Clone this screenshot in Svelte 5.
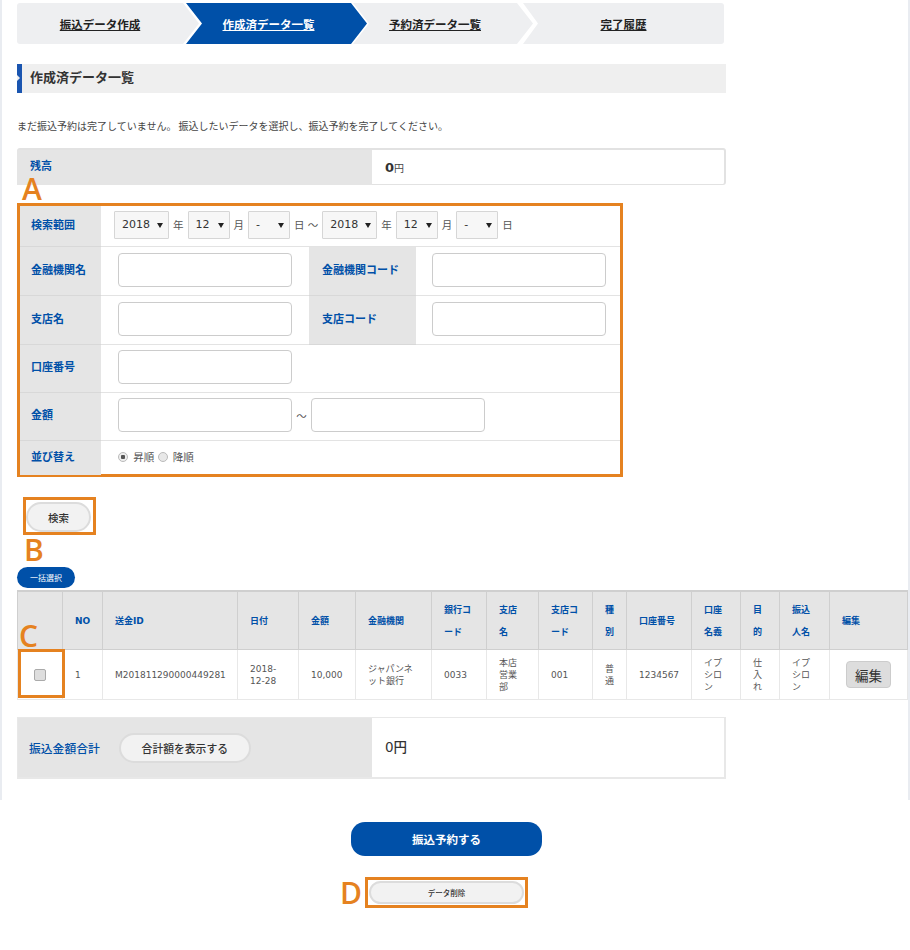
<script>
	const steps = [
		{ label: '振込データ作成', cls: 'first' },
		{ label: '作成済データ一覧', cls: 'mid active' },
		{ label: '予約済データ一覧', cls: 'mid' },
		{ label: '完了履歴', cls: 'last' }
	];

	const columns = [
		{ label: '', width: 45 },
		{ label: 'NO', width: 40 },
		{ label: '送金ID', width: 135 },
		{ label: '日付', width: 61 },
		{ label: '金額', width: 57 },
		{ label: '金融機関', width: 76 },
		{ label: '銀行コード', width: 55 },
		{ label: '支店名', width: 52 },
		{ label: '支店コード', width: 54 },
		{ label: '種別', width: 34 },
		{ label: '口座番号', width: 65 },
		{ label: '口座名義', width: 49 },
		{ label: '目的', width: 39 },
		{ label: '振込人名', width: 50 },
		{ label: '編集', width: 78 }
	];

	const row = [
		'1',
		'M201811290000449281',
		'2018-12-28',
		'10,000',
		'ジャパンネット銀行',
		'0033',
		'本店営業部',
		'001',
		'普通',
		'1234567',
		'イプシロン',
		'仕入れ',
		'イプシロン'
	];
</script>

{#snippet dropdown(value, cls)}
	<span class="select {cls}">
		<select>
			<option>{value}</option>
		</select>
	</span>
{/snippet}

<div class="page">
	<div class="frame">
		<nav class="steps">
			{#each steps as step}
				<a class="step {step.cls}" href="#top">{step.label}</a>
			{/each}
		</nav>

		<h1 class="heading">作成済データ一覧</h1>

		<p class="message">まだ振込予約は完了していません。 振込したいデータを選択し、振込予約を完了してください。</p>

		<div class="balance">
			<div class="balance-label">残高</div>
			<div class="balance-value"><strong>0</strong>円</div>
		</div>

		<div class="search">
			<span class="letter letter-a">A</span>
			<table class="search-table">
				<colgroup>
					<col class="c-label" />
					<col class="c-field" />
					<col class="c-label2" />
					<col />
				</colgroup>
				<tbody>
					<tr class="r-range">
						<th>検索範囲</th>
						<td colspan="3" class="range">
							<div class="range-row">
								{@render dropdown('2018', 'year')}
								<span class="unit">年</span>
								{@render dropdown('12', 'short')}
								<span class="unit">月</span>
								{@render dropdown('-', 'short')}
								<span class="unit">日 ～</span>
								{@render dropdown('2018', 'year')}
								<span class="unit">年</span>
								{@render dropdown('12', 'short')}
								<span class="unit">月</span>
								{@render dropdown('-', 'short')}
								<span class="unit">日</span>
							</div>
						</td>
					</tr>
					<tr class="r-tall">
						<th>金融機関名</th>
						<td><input type="text" /></td>
						<th>金融機関コード</th>
						<td class="second"><input type="text" /></td>
					</tr>
					<tr class="r-tall">
						<th>支店名</th>
						<td><input type="text" /></td>
						<th>支店コード</th>
						<td class="second"><input type="text" /></td>
					</tr>
					<tr class="r-mid">
						<th>口座番号</th>
						<td colspan="3"><input type="text" /></td>
					</tr>
					<tr class="r-mid">
						<th>金額</th>
						<td colspan="3" class="amount">
							<input type="text" />
							<span class="tilde">～</span>
							<input type="text" />
						</td>
					</tr>
					<tr class="r-sort">
						<th>並び替え</th>
						<td colspan="3" class="sort">
							<label><input type="radio" name="sort" checked /> 昇順</label>
							<label><input type="radio" name="sort" /> 降順</label>
						</td>
					</tr>
				</tbody>
			</table>
		</div>

		<div class="search-action">
			<button class="pill search-btn" type="button">検索</button>
			<span class="letter letter-b">B</span>
		</div>

		<button class="select-all" type="button">一括選択</button>

		<table class="list">
			<colgroup>
				{#each columns as col}
					<col style="width: {col.width}px" />
				{/each}
			</colgroup>
			<thead>
				<tr>
					{#each columns as col}
						<th>{col.label}</th>
					{/each}
				</tr>
			</thead>
			<tbody>
				<tr>
					<td class="check">
						<span class="letter letter-c">C</span>
						<span class="check-mark"></span>
						<input type="checkbox" />
					</td>
					{#each row as cell}
						<td>{cell}</td>
					{/each}
					<td class="edit"><button type="button">編集</button></td>
				</tr>
			</tbody>
		</table>

		<div class="total">
			<div class="total-label">
				<span>振込金額合計</span>
				<button class="pill total-btn" type="button">合計額を表示する</button>
			</div>
			<div class="total-value">0円</div>
		</div>
	</div>

	<div class="actions">
		<button class="reserve" type="button">振込予約する</button>
		<div class="delete-box">
			<span class="letter letter-d">D</span>
			<button class="pill delete-btn" type="button">データ削除</button>
		</div>
	</div>
</div>

<style>
	:global(body) {
		background: #fff;
	}

	.page {
		width: 910px;
		height: 950px;
		overflow: hidden;
		font-family: 'DejaVu Sans', 'Noto Sans CJK JP', sans-serif;
		font-size: 10px;
		color: #444;
	}

	.frame {
		box-sizing: border-box;
		height: 800px;
		padding: 3px 0 0 15px;
		border-left: 2px solid #e9ecf1;
		border-right: 2px solid #e9ecf1;
	}

	.steps {
		display: flex;
		height: 41px;
		width: 707px;
	}

	.step {
		display: flex;
		align-items: center;
		justify-content: center;
		box-sizing: border-box;
		height: 41px;
		background: #eeeff1;
		color: #222;
		font-size: 11.5px;
		font-weight: 700;
		text-decoration: underline;
	}

	.step.first {
		width: 182px;
		padding-right: 16px;
		border-radius: 3px 0 0 3px;
		clip-path: polygon(0 0, calc(100% - 16px) 0, 100% 50%, calc(100% - 16px) 100%, 0 100%);
	}

	.step.mid {
		width: 181px;
		margin-left: -13px;
		padding-right: 16px;
		clip-path: polygon(0 0, calc(100% - 16px) 0, 100% 50%, calc(100% - 16px) 100%, 0 100%, 16px 50%);
	}

	.step.mid + .step.mid {
		margin-left: -14px;
		width: 180px;
	}

	.step.last {
		width: 201px;
		margin-left: -10px;
		border-radius: 0 3px 3px 0;
		clip-path: polygon(0 0, 100% 0, 100% 100%, 0 100%, 15px 50%);
	}

	.step.active {
		background: #0050a8;
		color: #fff;
	}

	.heading {
		position: relative;
		box-sizing: border-box;
		width: 709px;
		height: 29px;
		margin: 20px 0 0;
		padding-left: 8px;
		border-left: 5px solid #1a55b0;
		background: #efefef;
		color: #333;
		font-size: 13px;
		font-weight: 700;
		line-height: 28px;
	}

	.heading::before {
		content: '';
		position: absolute;
		left: -5px;
		top: 11px;
		border: 3px solid transparent;
		border-left-color: #efefef;
	}

	.message {
		margin: 27px 0 0;
		font-size: 10px;
		line-height: 14px;
		word-spacing: -1px;
		color: #444;
	}

	.balance {
		display: flex;
		box-sizing: border-box;
		width: 709px;
		height: 37px;
		margin-top: 14px;
		border: 1px solid #e2e2e2;
		border-top-width: 2px;
		border-right-width: 2px;
		border-radius: 3px;
	}

	.balance-label {
		box-sizing: border-box;
		flex: none;
		width: 355px;
		padding-left: 13px;
		background: #e5e5e5;
		color: #0050a8;
		font-size: 11px;
		font-weight: 700;
		line-height: 34px;
		margin: 0 0 -1px -1px;
	}

	.balance-value {
		padding-left: 13px;
		font-size: 10px;
		line-height: 35px;
	}

	.balance-value strong {
		font-size: 13px;
		color: #333;
	}

	.search {
		position: relative;
		box-sizing: border-box;
		width: 606px;
		height: 274px;
		margin-top: 18px;
		border: 3px solid #e58220;
	}

	.letter {
		position: absolute;
		color: #e58220;
		font-family: 'Open Sans', sans-serif;
		font-size: 30px;
		font-weight: 600;
		line-height: 30px;
	}

	.letter-a {
		left: 2px;
		top: -32px;
	}

	.search-table {
		width: 100%;
		border-collapse: collapse;
		table-layout: fixed;
	}

	.c-label {
		width: 81px;
	}

	.c-field {
		width: 208px;
	}

	.c-label2 {
		width: 107px;
	}

	.search-table th {
		padding: 0 0 4px 11px;
		background: #e5e5e5;
		color: #0050a8;
		font-size: 11px;
		font-weight: 700;
		text-align: left;
		border-bottom: 1px solid #d8d8d8;
	}

	.search-table td {
		padding: 0 0 2px 17px;
		border-bottom: 1px solid #e3e3e3;
		white-space: nowrap;
	}

	.search-table td.second {
		padding-left: 16px;
	}

	.search-table tr:last-child th,
	.search-table tr:last-child td {
		border-bottom: 0;
	}

	.search-table th + td + th {
		padding-left: 13px;
	}

	.r-range {
		height: 40px;
	}

	.r-tall {
		height: 49px;
	}

	.r-mid {
		height: 48px;
	}

	.r-sort {
		height: 35px;
	}

	.search-table td.range {
		padding-left: 13px;
	}

	.range-row {
		display: flex;
		align-items: center;
	}

	.select {
		position: relative;
		display: block;
		flex: none;
	}

	.select::after {
		content: '';
		position: absolute;
		right: 6px;
		top: 12px;
		border: 3.5px solid transparent;
		border-top: 5px solid #222;
		border-bottom: 0;
		pointer-events: none;
	}

	.select select {
		display: block;
		box-sizing: border-box;
		height: 28px;
		padding: 0 0 0 7px;
		appearance: none;
		border: 1px solid #d6d6d6;
		border-radius: 1px;
		background: #f7f7f7;
		color: #333;
		font: inherit;
		font-size: 11px;
	}

	.select.year select {
		width: 55px;
	}

	.select.short select {
		width: 42px;
	}

	.unit {
		margin: 0 4px;
		color: #555;
		font-size: 10.5px;
	}

	.tilde {
		margin: 0 1px;
		color: #555;
		font-size: 10.5px;
		vertical-align: middle;
	}

	input[type='text'] {
		box-sizing: border-box;
		width: 174px;
		height: 34px;
		padding: 0 8px;
		border: 1px solid #ccc;
		border-radius: 4px;
		background: #fff;
		vertical-align: middle;
	}

	.sort label {
		color: #555;
		font-size: 10.5px;
	}

	input[type='radio'] {
		box-sizing: border-box;
		width: 10px;
		height: 10px;
		margin: 0 2px 2px 0;
		vertical-align: middle;
		appearance: none;
		border: 1px solid #bbb;
		border-radius: 50%;
		background: #e8e8e8;
	}

	input[type='radio']:checked {
		background: radial-gradient(circle, #555 0 2px, #eee 2.5px);
	}

	.search-action {
		position: relative;
		box-sizing: border-box;
		width: 73px;
		height: 38px;
		margin: 20px 0 0 6px;
		padding: 2px 0 0 0;
		border: 3px solid #e58220;
	}

	.letter-b {
		left: -2px;
		top: 35px;
	}

	.pill {
		box-sizing: border-box;
		border: 2px solid #dcdcdc;
		background: #f2f2f2;
		color: #333;
		font-family: inherit;
		font-weight: 700;
		padding: 0;
	}

	.search-btn {
		display: block;
		width: 65px;
		height: 30px;
		border-radius: 15px;
		font-size: 10.5px;
		font-weight: 500;
	}

	.select-all {
		display: block;
		width: 58px;
		height: 21px;
		margin-top: 32px;
		padding: 0;
		border: 0;
		border-radius: 11px;
		background: #0050a8;
		color: #fff;
		font-family: inherit;
		font-size: 8px;
	}

	.list {
		width: 890px;
		margin-top: 2px;
		border-collapse: collapse;
		table-layout: fixed;
		font-size: 9px;
	}

	.list th {
		height: 57px;
		padding: 0 14px 0 12px;
		border: 1px solid #cfcfcf;
		border-top-width: 2px;
		background: #e5e5e5;
		color: #0050a8;
		font-weight: 700;
		line-height: 22px;
		text-align: left;
		overflow: visible;
	}

	.list td {
		height: 49px;
		padding: 0 14px 0 12px;
		border: 1px solid #e8e8e8;
		color: #555;
		line-height: 12px;
		overflow: visible;
	}

	.list td.check {
		position: relative;
		padding: 0 0 0 16px;
	}

	.check input {
		box-sizing: border-box;
		display: block;
		width: 12px;
		height: 12px;
		margin: 0;
		appearance: none;
		border: 1px solid #aaa;
		border-radius: 2px;
		background: #dedede;
	}

	.check-mark {
		position: absolute;
		left: 0;
		top: -1px;
		box-sizing: border-box;
		width: 47px;
		height: 49px;
		border: 3px solid #e58220;
	}

	.letter-c {
		left: 1px;
		top: -29px;
	}

	.list td.edit {
		padding: 0 0 0 16px;
	}

	.edit button {
		display: block;
		box-sizing: border-box;
		width: 45px;
		height: 27px;
		padding: 0;
		border: 1px solid #ccc;
		border-radius: 4px;
		background: #ddd;
		color: #333;
		font-family: inherit;
		font-size: 13.5px;
	}

	.total {
		display: flex;
		box-sizing: border-box;
		width: 709px;
		height: 62px;
		margin-top: 17px;
		border: 1px solid #e8e8e8;
		border-right-width: 2px;
		border-bottom-width: 2px;
	}

	.total-label {
		box-sizing: border-box;
		flex: none;
		display: flex;
		align-items: center;
		gap: 19px;
		width: 354px;
		padding-left: 11px;
		background: #e5e5e5;
		color: #0050a8;
		font-size: 11.8px;
		font-weight: 500;
	}

	.total-btn {
		flex: none;
		width: 132px;
		height: 30px;
		border-radius: 15px;
		font-size: 10.8px;
		font-weight: 500;
	}

	.total-value {
		padding-left: 13px;
		color: #333;
		font-size: 13.5px;
		font-weight: 500;
		line-height: 58px;
	}

	.actions {
		display: flex;
		flex-direction: column;
		align-items: center;
		width: 893px;
		padding-top: 22px;
	}

	.reserve {
		width: 191px;
		height: 34px;
		padding: 0;
		border: 0;
		border-radius: 14px;
		background: #0050a8;
		color: #fff;
		font-family: inherit;
		font-size: 11.5px;
		font-weight: 700;
	}

	.delete-box {
		position: relative;
		box-sizing: border-box;
		width: 163px;
		height: 31px;
		margin-top: 21px;
		padding: 1px 0 0 1px;
		border: 3px solid #e58220;
	}

	.letter-d {
		left: -28px;
		top: -2px;
	}

	.delete-btn {
		display: block;
		width: 155px;
		height: 23px;
		border-radius: 12px;
		font-size: 7.5px;
		font-weight: 500;
	}
</style>
